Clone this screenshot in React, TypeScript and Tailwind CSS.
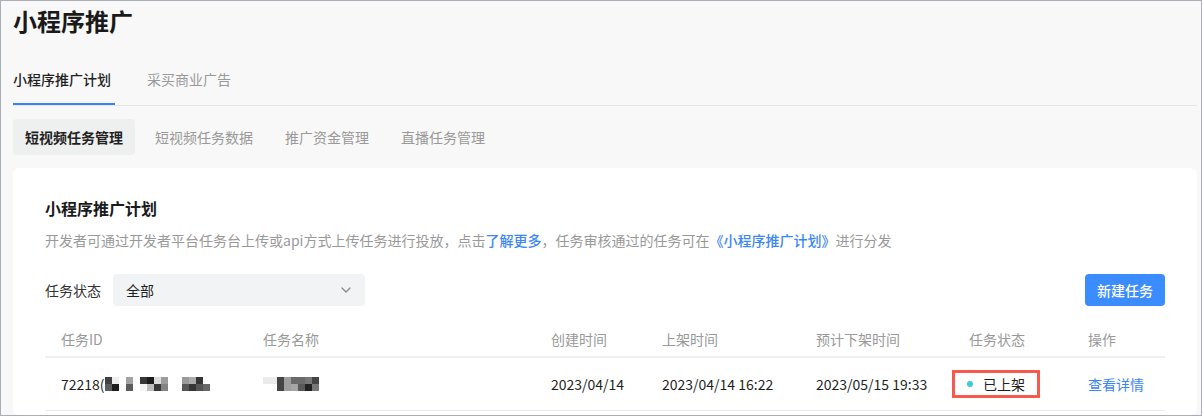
import { ChevronDown } from "lucide-react";

const idTop = ["#404040", "#eeeeee", "#ffffff", "#a3a3a3", "#ffffff", "#363636", "#1b1b1b", "#dcdcdc", "#9c9c9c", "#ffffff", "#ffffff", "#9a9a9a", "#ababab", "#353535", "#ffffff"];
const idBottom = ["#5c5c5c", "#1d1d1d", "#ffffff", "#5c5c5c", "#ffffff", "#f4f4f4", "#bdbdbd", "#383838", "#838383", "#ffffff", "#ffffff", "#575757", "#363636", "#555555", "#686868"];
const nameTop = ["#ebebeb", "#ebebeb", "#454545", "#9e9e9e", "#6a6a6a", "#6a6a6a", "#777777", "#454545"];
const nameBottom = ["#ffffff", "#ffffff", "#454545", "#9e9e9e", "#a5a5a5", "#5a5a5a", "#222222", "#777777"];

// pixelated redaction blocks
function Mosaic({ top, bottom }: { top: string[]; bottom: string[] }) {
  return (
    <span className="inline-flex flex-col">
      <span className="flex">
        {top.map((c, i) => (
          <span key={i} className="h-[7px] w-[7px]" style={{ background: c }} />
        ))}
      </span>
      <span className="flex">
        {bottom.map((c, i) => (
          <span key={i} className="h-[7px] w-[7px]" style={{ background: c }} />
        ))}
      </span>
    </span>
  );
}

const columns = [
  { label: "任务ID", w: "w-[202px]" },
  { label: "任务名称", w: "w-[288px]" },
  { label: "创建时间", w: "w-[111px]" },
  { label: "上架时间", w: "w-[154px]" },
  { label: "预计下架时间", w: "w-[153px]" },
  { label: "任务状态", w: "w-[119px]" },
  { label: "操作", w: "flex-1" },
];

export default function App() {
  return (
    <div className="flex h-[416px] w-[1202px] flex-col overflow-hidden border border-[#a9aeb4] bg-[#f8f8f8] pl-3 pr-1 font-['Noto_Sans_CJK_SC',sans-serif] text-[#1f1f1f]">
      <h1 className="mt-1 text-[24px] font-semibold leading-[32px] text-[#1a1a1a]">小程序推广</h1>

      <div className="mt-[31px] flex gap-8 border-b border-[#e6e6e6]">
        <div className="w-[102px] border-b-2 border-[#3b82f6] pb-[13px] text-[14px] leading-[22px] font-medium text-[#1f1f1f]">
          小程序推广计划
        </div>
        <div className="pb-[13px] text-[14px] leading-[22px] text-[#999999]">采买商业广告</div>
      </div>

      <div className="mt-[13px] flex gap-2">
        <div className="flex h-9 items-center rounded bg-[#eeefef] px-3 text-[14px] font-semibold text-[#1f1f1f]">
          短视频任务管理
        </div>
        <div className="flex h-9 items-center px-3 text-[14px] text-[#999999]">短视频任务数据</div>
        <div className="flex h-9 items-center px-3 text-[14px] text-[#999999]">推广资金管理</div>
        <div className="flex h-9 items-center px-3 text-[14px] text-[#999999]">直播任务管理</div>
      </div>

      <div className="mt-[13px] flex-1 rounded-md bg-white px-8 pt-7">
        <h2 className="text-[16px] font-semibold leading-6 text-[#1a1a1a]">小程序推广计划</h2>
        <p className="mt-[9px] text-[14px] leading-[22px] text-[#999999]">
          开发者可通过开发者平台任务台上传或api方式上传任务进行投放，点击
          <a className="font-medium text-[#3b86f7]">了解更多</a>
          ，任务审核通过的任务可在
          <a className="font-medium text-[#3b86f7]">《小程序推广计划》</a>
          进行分发
        </p>

        <div className="mt-[23px] flex items-center">
          <span className="text-[14px] text-[#333333]">任务状态</span>
          <div className="ml-3 flex h-8 w-[252px] items-center justify-between rounded bg-[#f2f3f5] pl-[13px] pr-[11px]">
            <span className="text-[14px] text-[#1f1f1f]">全部</span>
            <ChevronDown size={16} strokeWidth={2} className="text-[#8a8a8a]" />
          </div>
          <button className="ml-auto h-8 w-20 rounded bg-[#3b8cff] text-[14px] font-medium text-white">新建任务</button>
        </div>

        <div className="mt-4">
          <div className="flex h-9 items-center border-b-2 border-[#efefef]">
            {columns.map((c) => (
              <div key={c.label} className={`${c.w} pl-4 text-[14px] text-[#999999]`}>
                {c.label}
              </div>
            ))}
          </div>
          <div className="flex h-[53px] items-center border-b border-[#ebebeb] text-[14px] text-[#1f1f1f]">
            <div className="flex w-[202px] items-center pl-4">
              <span>72218(</span>
              <Mosaic top={idTop} bottom={idBottom} />
            </div>
            <div className="flex w-[288px] items-center pl-4">
              <Mosaic top={nameTop} bottom={nameBottom} />
            </div>
            <div className="w-[111px] pl-4">2023/04/14</div>
            <div className="w-[154px] pl-4">2023/04/14 16:22</div>
            <div className="w-[153px] pl-4">2023/05/15 19:33</div>
            <div className="w-[119px]">
              <div className="-ml-px flex h-7 w-[88px] items-center border-[3px] border-[#f75a4c] pl-3">
                <span className="h-[6px] w-[6px] rounded-full bg-[#3ccbd8]" />
                <span className="ml-[10px]">已上架</span>
              </div>
            </div>
            <div className="flex-1 pl-4 text-[#3b86f7]">查看详情</div>
          </div>
        </div>
      </div>
    </div>
  );
}
